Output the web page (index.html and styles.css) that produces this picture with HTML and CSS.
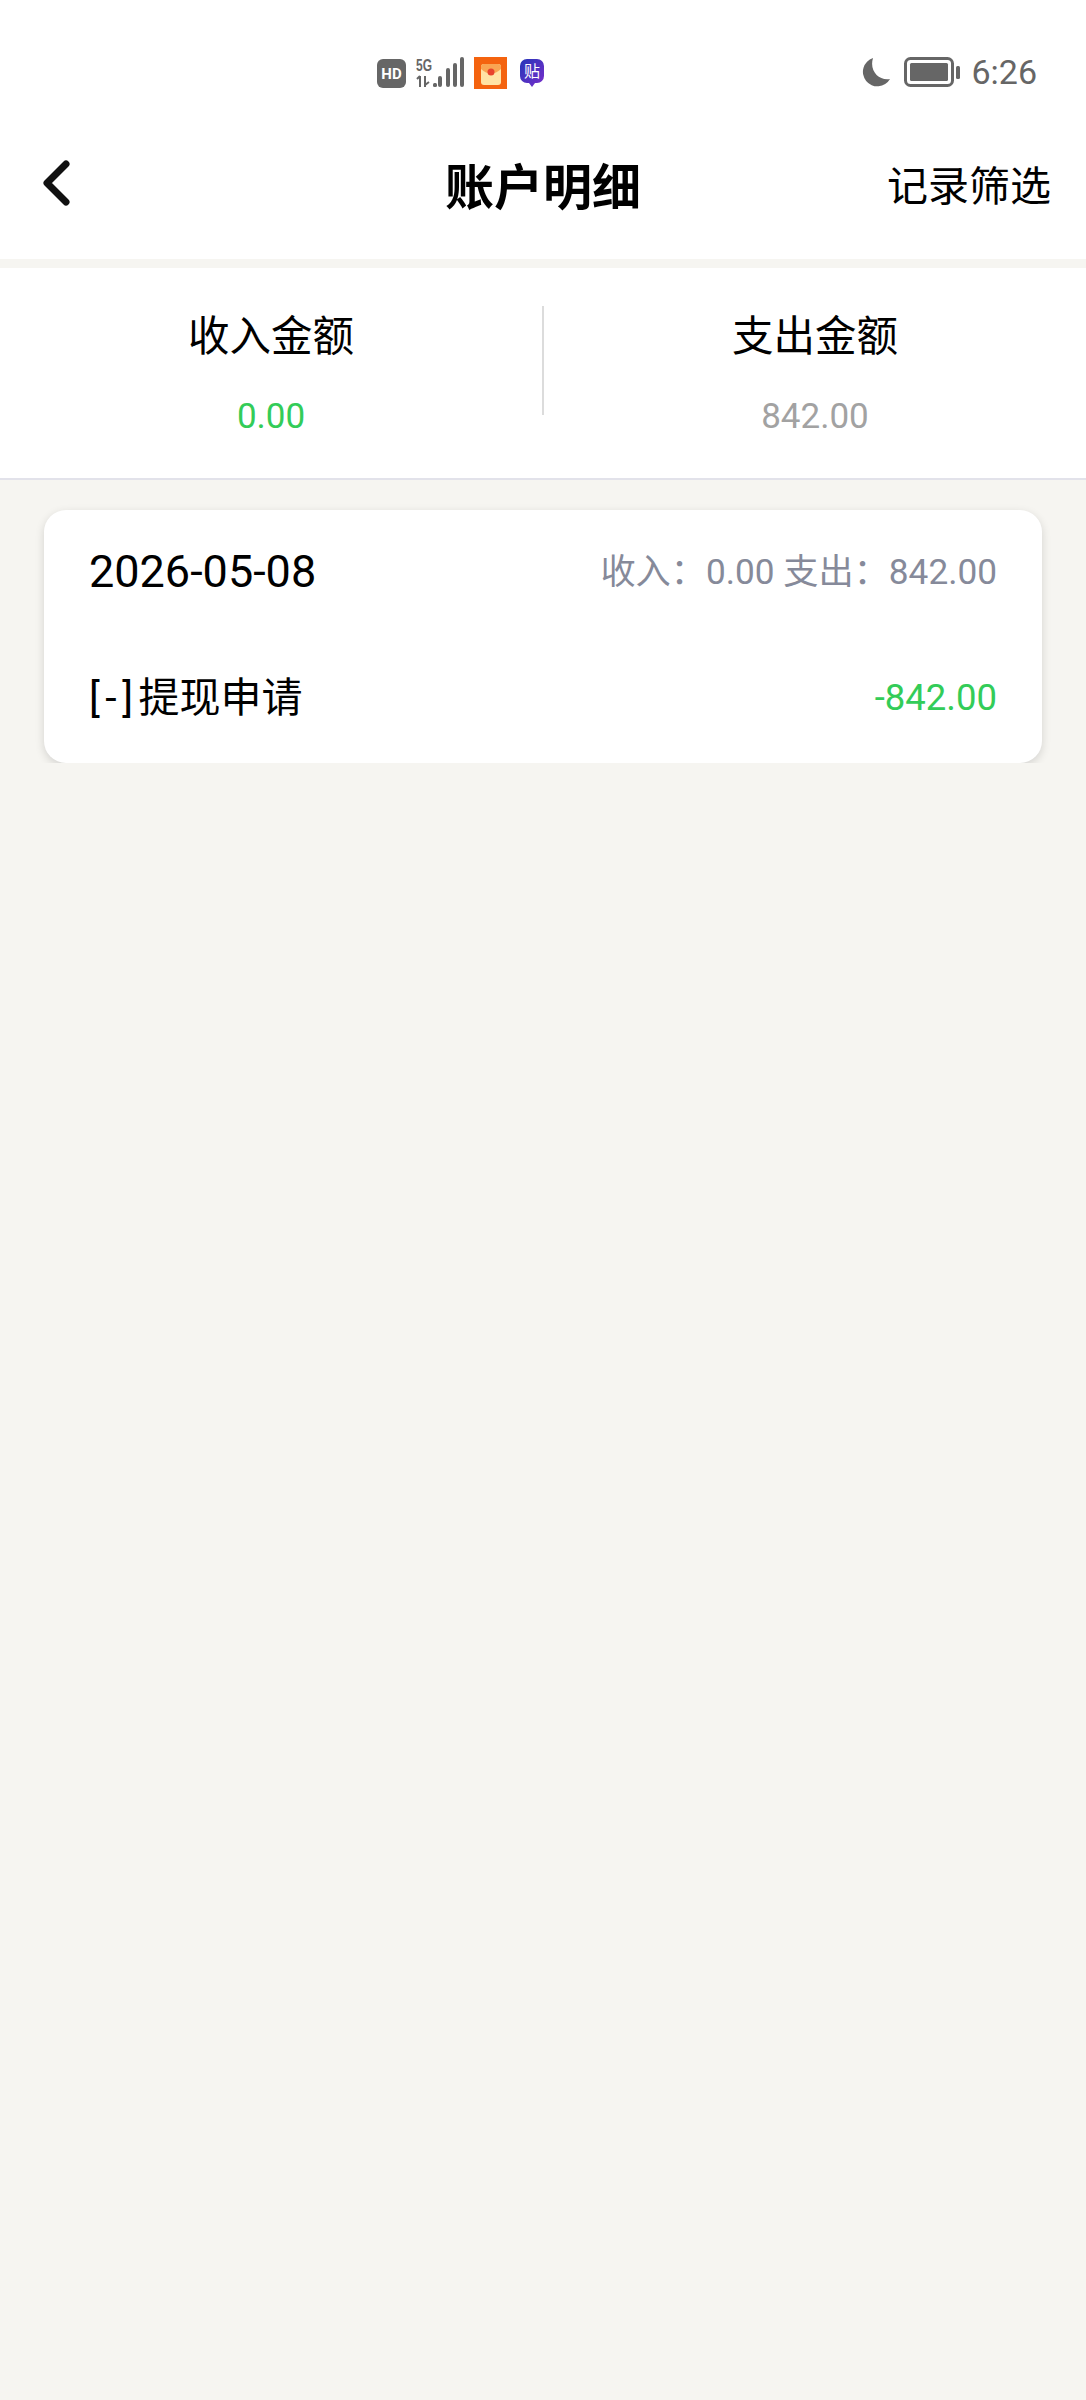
FILE: index.html
```html
<!DOCTYPE html>
<html>
<head>
	<title>账户明细</title>
	<link rel="stylesheet" href="styles.css">
</head>
<body>
	<div class="status">
		<div class="status-left">
			<svg width="29" height="29" viewBox="0 0 29 29"><rect width="29" height="29" rx="6" fill="#666"/><text x="14.5" y="20" class="hd">HD</text></svg>
			<svg width="48" height="32" viewBox="0 0 48 32">
				<text x="0" y="14" class="five-g" textLength="16" lengthAdjust="spacingAndGlyphs">5G</text>
				<path d="M4 19v11M1 22l3-3M9 19v11M13 25l-4 3" stroke="#666" stroke-width="2" fill="none"/>
				<rect x="17" y="26" width="4" height="4" rx="1.500" fill="#666"/>
				<rect x="22" y="19" width="4" height="11" rx="2" fill="#666"/>
				<rect x="30" y="11" width="4" height="19" rx="2" fill="#666"/>
				<rect x="37" y="6" width="4" height="24" rx="2" fill="#666"/>
				<rect x="44" y="0" width="4" height="30" rx="2" fill="#666"/>
			</svg>
			<svg width="33" height="32" viewBox="0 0 33 32">
				<rect width="33" height="32" fill="#f4630f"/>
				<rect x="7" y="7" width="20" height="21" rx="3" fill="#ffe3a4"/>
				<path d="M7 12q10 9 20 0v-2a3 3 0 0 0-3-3H10a3 3 0 0 0-3 3z" fill="#f9a552"/>
				<circle cx="17" cy="15" r="3.500" fill="#e8432c"/>
			</svg>
			<svg class="tie-icon" width="24" height="28" viewBox="0 0 24 28">
				<defs><linearGradient id="tie" x1="0" y1="0" x2="1" y2="1"><stop offset="0" stop-color="#2436b8"/><stop offset="1" stop-color="#7a2ecb"/></linearGradient></defs>
				<path d="M7 0h10a7 7 0 0 1 7 7v10a7 7 0 0 1-7 7h-2l-3 4-3-4H7a7 7 0 0 1-7-7V7a7 7 0 0 1 7-7z" fill="url(#tie)"/>
				<text x="12" y="18" class="tie">贴</text>
			</svg>
		</div>
		<div class="status-right">
			<svg class="moon" width="29" height="29" viewBox="0 0 29 29"><path d="M12 0a14.500 14.500 0 1 0 17 21C18 23 8 13 12 0z" fill="#666"/></svg>
			<svg width="56" height="30" viewBox="0 0 56 30">
				<rect x="1.500" y="1.500" width="47" height="27" rx="5" fill="none" stroke="#666" stroke-width="3"/>
				<rect x="6" y="6" width="38" height="18" rx="1.500" fill="#666"/>
				<rect x="52" y="9" width="4" height="13" rx="1.500" fill="#666"/>
			</svg>
			<span class="time">6:26</span>
		</div>
	</div>

	<div class="header">
		<svg class="back" width="30" height="46" viewBox="0 0 30 46"><path d="M25 4L6 23l19 19" fill="none" stroke="#111" stroke-width="7" stroke-linecap="round" stroke-linejoin="round"/></svg>
		<div class="title">账户明细</div>
		<div class="filter">记录筛选</div>
	</div>

	<div class="stats">
		<div class="stat">
			<div class="stat-label">收入金额</div>
			<div class="stat-num green">0.00</div>
		</div>
		<div class="stat-line"></div>
		<div class="stat">
			<div class="stat-label">支出金额</div>
			<div class="stat-num gray">842.00</div>
		</div>
	</div>

	<div class="card">
		<div class="row">
			<span class="date">2026-05-08</span>
			<span class="meta">收入：0.00 支出：842.00</span>
		</div>
		<div class="row">
			<span class="name"><span class="sign">[-]</span>提现申请</span>
			<span class="amount green">-842.00</span>
		</div>
	</div>
</body>
</html>
```

FILE: styles.css
```css
body{
	margin: 0;
	background: #f6f5f1;
	font-family: Roboto, "Noto Sans CJK SC", sans-serif;
	color: #000;
}

.status{
	height: 113px;
	box-sizing: border-box;
	padding: 57px 49px 0 377px;
	background: #fff;
	display: flex;
	justify-content: space-between;
	align-items: flex-start;
}

.status-left{
	display: flex;
	align-items: center;
	gap: 10px;
}

.tie-icon{
	margin-left: 3px;
}

.status-right{
	display: flex;
	align-items: center;
	gap: 11px;
}

.moon{
	margin-right: 3px;
}

.hd{
	font: bold 15px Roboto, sans-serif;
	fill: #fff;
	text-anchor: middle;
}

.five-g{
	font: bold 16px "Liberation Sans", sans-serif;
	fill: #666;
}

.tie{
	font: 16px "Noto Sans CJK SC", sans-serif;
	fill: #fff;
	text-anchor: middle;
}

.time{
	font-size: 34px;
	color: #666;
	line-height: 30px;
}

.header{
	height: 146px;
	box-sizing: border-box;
	padding: 0 35px 6px;
	background: #fff;
	display: grid;
	grid-template-columns: 1fr auto 1fr;
	align-items: center;
}

.back{
	margin-left: 6px;
}

.title{
	font-size: 49px;
	font-weight: bold;
}

.filter{
	font-size: 41px;
	text-align: right;
}

.stats{
	margin-top: 9px;
	height: 212px;
	box-sizing: border-box;
	background: #fff;
	border-bottom: 2px solid #e2e2ea;
	display: flex;
	align-items: flex-start;
}

.stat{
	flex: 1;
	text-align: center;
	padding-top: 42px;
}

.stat-line{
	width: 2px;
	height: 109px;
	margin-top: 38px;
	background: #dcdcdc;
}

.stat-label{
	font-size: 41.5px;
	line-height: 54px;
}

.stat-num{
	font-size: 35px;
	line-height: 44px;
	margin-top: 31px;
}

.green{
	color: #33cc58;
}

.gray{
	color: #a2a2a2;
}

.card{
	margin: 30px 44px 0;
	height: 253px;
	box-sizing: border-box;
	padding: 0 45px;
	background: #fff;
	border-radius: 22px;
	box-shadow: 0 3px 10px rgba(0, 0, 0, 0.14);
	display: grid;
	grid-template-rows: 122px 128px;
}

.row{
	display: flex;
	justify-content: space-between;
	align-items: center;
}

.date{
	font-size: 45px;
}

.meta{
	font-size: 35.2px;
	color: #868a9a;
	margin-bottom: 6px;
}

.name{
	font-size: 41px;
	margin-bottom: 4px;
}

.sign{
	letter-spacing: 5.5px;
}

.amount{
	font-size: 36.5px;
	margin-top: 2px;
}
```
